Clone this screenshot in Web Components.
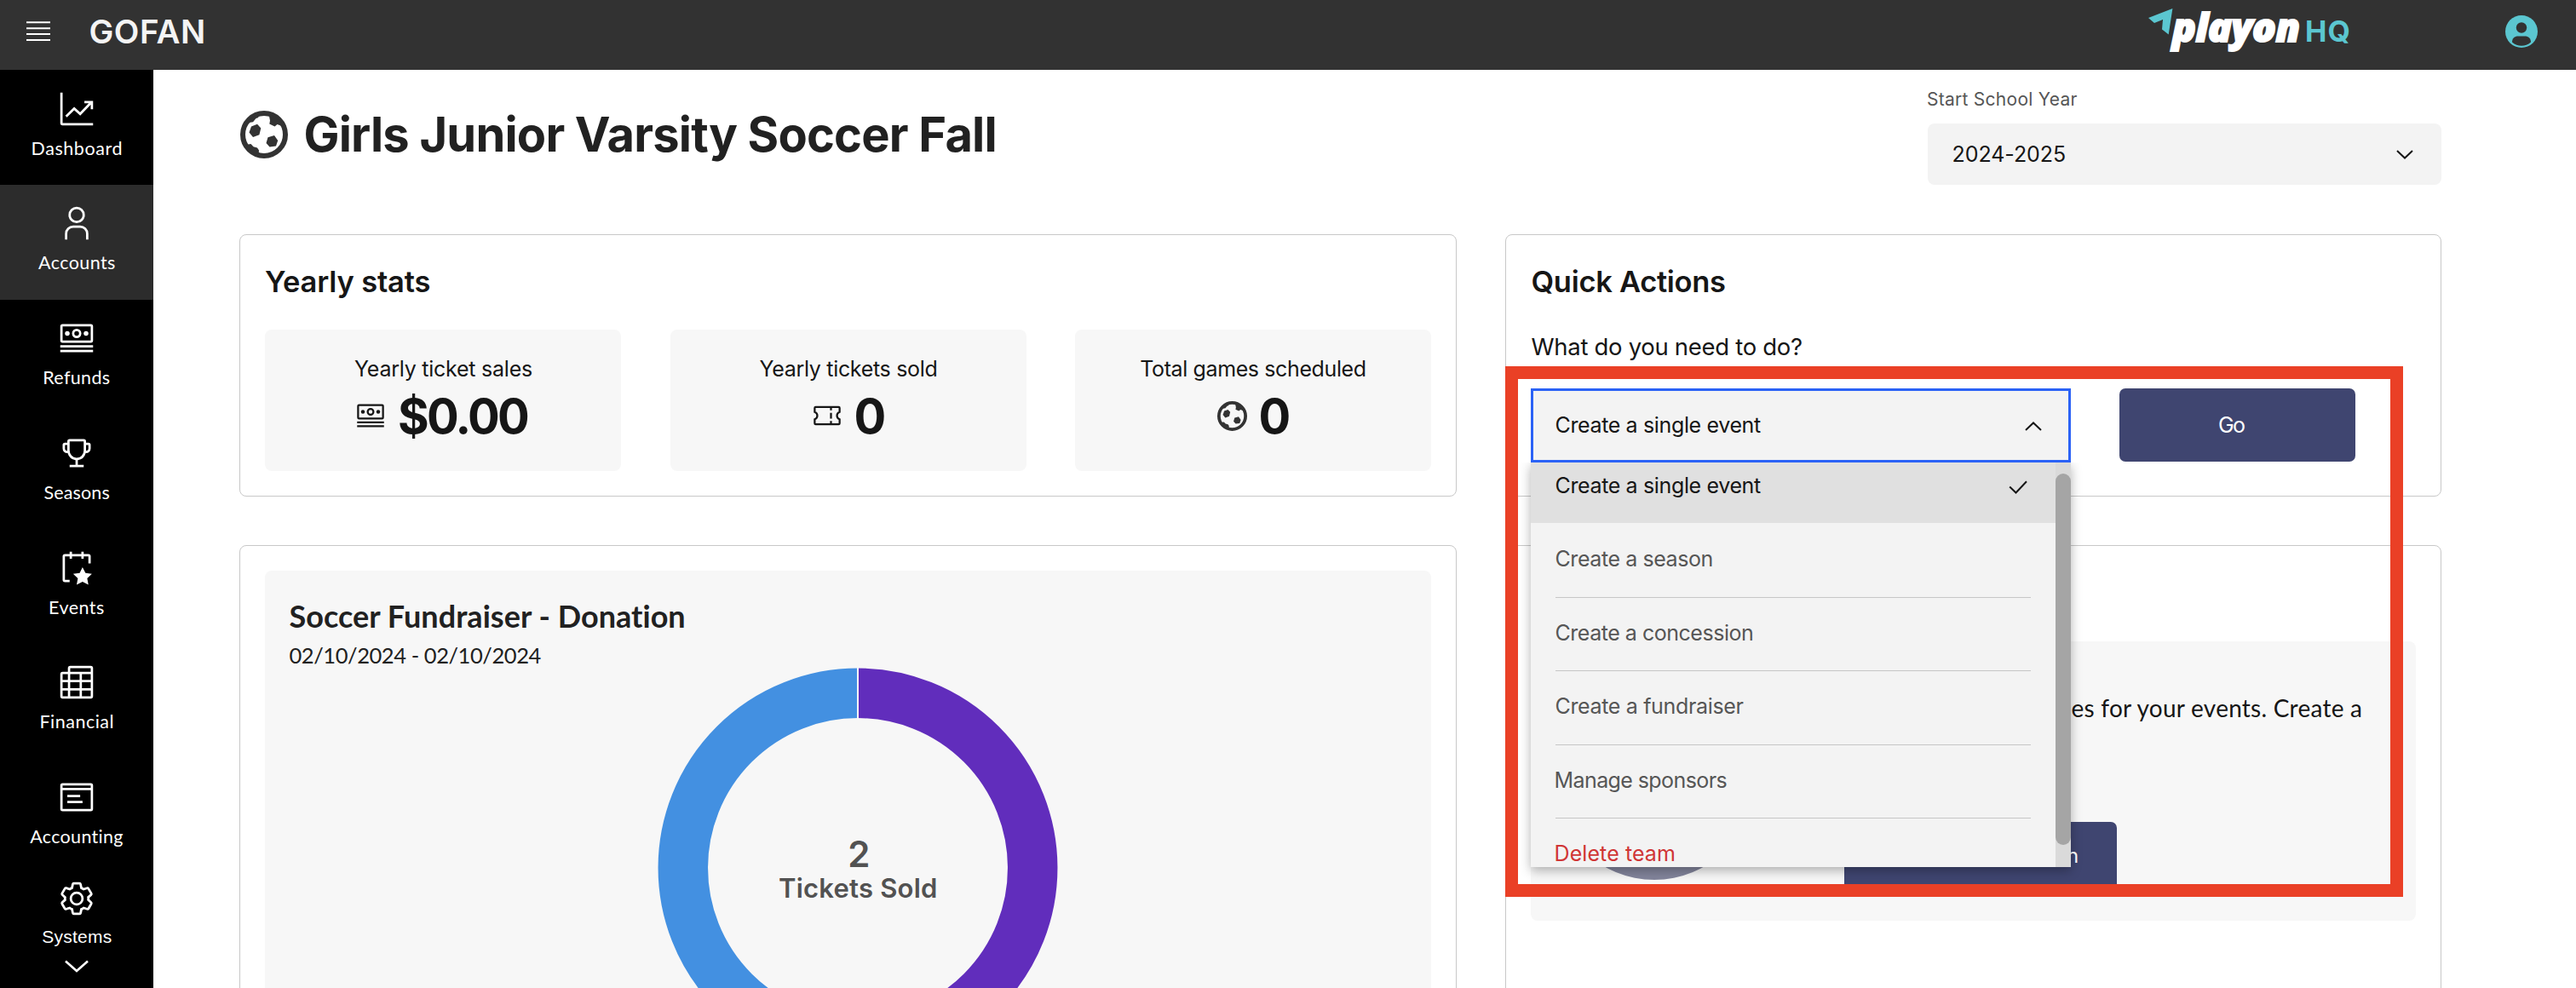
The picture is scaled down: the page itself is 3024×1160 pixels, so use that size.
<!DOCTYPE html>
<html lang="en">
<head>
<meta charset="utf-8">
<title>GoFan HQ</title>
<style>
html,body{margin:0;padding:0;background:#fff}
body{width:3024px;height:1160px;overflow:hidden;font-family:Inter,"Liberation Sans",sans-serif;color:#161616}
</style>
</head>
<body>
<gofan-app></gofan-app>
<script>
const make = (name, html, ready) => customElements.define(name, class extends HTMLElement {
  connectedCallback() {
    if (this.shadowRoot) return;
    const root = this.attachShadow({ mode: 'open' });
    root.innerHTML = typeof html === 'function' ? html(this) : html;
    if (ready) ready(this, root);
  }
});

/* One line of type. "w" is the inked measure, "rise" the distance from the box top to the baseline. */
const pen = document.createElement('canvas').getContext('2d');
make('t-line', `<style>
  :host{display:block;flex:none;white-space:pre}
  span{display:block}
</style><span><slot></slot></span>`, (el, root) => {
  const size = +el.getAttribute('size'), w = +el.getAttribute('w'), rise = +el.getAttribute('rise');
  const weight = el.getAttribute('weight') || 400, style = el.hasAttribute('italic') ? 'italic' : 'normal';
  const family = el.getAttribute('family') || 'Inter', text = el.textContent;
  pen.font = `${style} ${weight} ${size}px "${family}"`;
  const m = pen.measureText(text), ink = m.actualBoundingBoxLeft + m.actualBoundingBoxRight;
  const ls = text.length > 1 ? (w - ink) / (text.length - 1) : 0;
  const L = Math.round(size * 1.3);
  const base = L / 2 + (m.fontBoundingBoxAscent - m.fontBoundingBoxDescent) / 2;
  el.style.cssText += `;width:${w}px;height:${rise}px`;
  const s = root.querySelector('span');
  s.style.cssText = `font:${style} ${weight} ${size}px/${L}px "${family}",sans-serif;letter-spacing:${ls}px;` +
    `transform:translate(${m.actualBoundingBoxLeft}px,${rise - base}px)`;
});

const ICONS = {
  chart: ['0 0 32 32', '<path d="M4 2H2v26a2 2 0 0 0 2 2h26v-2H4z"/><path d="M7 22.3 13.9 15.6 19 20.2 28.6 10.2M22.6 10H29v6.2" fill="none" stroke="currentColor" stroke-width="2"/>'],
  user: ['0 0 32 32', '<path d="M16 4a5 5 0 1 1-5 5 5 5 0 0 1 5-5m0-2a7 7 0 1 0 7 7A7 7 0 0 0 16 2zM26 30H24V25a5 5 0 0 0-5-5H13a5 5 0 0 0-5 5v5H6V25a7 7 0 0 1 7-7h6a7 7 0 0 1 7 7z"/>'],
  money: ['0 0 32 32', '<path d="M2 22h28v2H2zM2 26h28v2H2z"/><circle cx="24" cy="12" r="2"/><circle cx="8" cy="12" r="2"/><path d="M16 16a4 4 0 1 1 4-4 4 4 0 0 1-4 4zm0-6a2 2 0 1 0 2 2 2 2 0 0 0-2-2z"/><path d="M28 20H4a2 2 0 0 1-2-2V6a2 2 0 0 1 2-2H28a2 2 0 0 1 2 2V18a2 2 0 0 1-2 2zm0-14H4V18H28z"/>'],
  trophy: ['0 0 32 32', '<path d="M26 7H24V6a2 2 0 0 0-2-2H10A2 2 0 0 0 8 6V7H6A2 2 0 0 0 4 9v3a4 4 0 0 0 4 4h.322A8.169 8.169 0 0 0 15 21.934V26H10v2H22V26H17V21.931A7.966 7.966 0 0 0 23.74 16H24a4 4 0 0 0 4-4V9A2 2 0 0 0 26 7zM8 14a2 2 0 0 1-2-2V9H8zm14 0a6 6 0 0 1-6.186 5.997A6.199 6.199 0 0 1 10 13.707V6H22zm4-2a2 2 0 0 1-2 2V9h2z"/>'],
  event: ['0 0 32 32', '<path d="M21 15 23.549 19.938 29 20.729 25 24.573 26 30 21 27.438 16 30 17 24.573 13 20.729 18.6 19.938z" transform="translate(0 .2)"/><path d="M26 4H22V2H20V4H12V2H10V4H6A2 2 0 0 0 4 6V26a2 2 0 0 0 2 2h4V26H6V6h4V8h2V6h8V8h2V6h4v6h2V6A2 2 0 0 0 26 4z"/>'],
  table: ['0 0 32 32', '<path d="M9.5 8H4a1 1 0 0 0-1 1V28a1 1 0 0 0 1 1H28a1 1 0 0 0 1-1V4a1 1 0 0 0-1-1H10.500a1 1 0 0 0-1 1V29M9.500 8H29M3 15H29M3 22H29M19.500 8V29" fill="none" stroke="currentColor" stroke-width="2"/>'],
  account: ['0 0 32 32', '<path d="M28 4H4A2 2 0 0 0 2 6V26a2 2 0 0 0 2 2H28a2 2 0 0 0 2-2V6A2 2 0 0 0 28 4zm0 2V8H4V6zM4 26V10H28V26z"/><path d="M8 14H19v2H8zM8 19H21v2H8z"/>'],
  gear: ['0 0 32 32', '<path d="M27 16.76c0-.25 0-.5 0-.76s0-.51 0-.77l1.92-1.68A2 2 0 0 0 29.3 11L26.94 7a2 2 0 0 0-1.73-1 2 2 0 0 0-.64.1l-2.43.82a11.35 11.35 0 0 0-1.31-.75l-.51-2.52a2 2 0 0 0-2-1.61H13.64a2 2 0 0 0-2 1.61l-.51 2.52a11.48 11.48 0 0 0-1.32.75L7.43 6.06A2 2 0 0 0 6.79 6 2 2 0 0 0 5.06 7L2.7 11a2 2 0 0 0 .41 2.51L5 15.24c0 .25 0 .5 0 .76s0 .51 0 .77L3.11 18.45A2 2 0 0 0 2.7 21L5.06 25a2 2 0 0 0 1.73 1 2 2 0 0 0 .64-.1l2.43-.82a11.35 11.35 0 0 0 1.31.75l.51 2.52a2 2 0 0 0 2 1.61h4.72a2 2 0 0 0 2-1.61l.51-2.52a11.48 11.48 0 0 0 1.32-.75l2.42.82a2 2 0 0 0 .64.1 2 2 0 0 0 1.73-1L29.3 21a2 2 0 0 0-.41-2.51zM25.21 24l-3.43-1.16a8.86 8.86 0 0 1-2.71 1.57L18.36 28H13.64l-.71-3.55a9.36 9.36 0 0 1-2.7-1.57L6.79 24 4.43 20l2.72-2.4a8.9 8.9 0 0 1 0-3.13L4.43 12 6.79 8l3.43 1.16a8.86 8.86 0 0 1 2.71-1.57L13.64 4h4.72l.71 3.55a9.36 9.36 0 0 1 2.7 1.57L25.21 8 27.57 12l-2.72 2.4a8.9 8.9 0 0 1 0 3.13L27.57 20z"/><path d="M16 22a6 6 0 1 1 6-6A5.94 5.94 0 0 1 16 22zm0-10a3.91 3.91 0 0 0-4 4 3.91 3.91 0 0 0 4 4 3.91 3.91 0 0 0 4-4A3.91 3.91 0 0 0 16 12z"/>'],
  ticket: ['0 0 32 32', '<path d="M4 7H28a1 1 0 0 1 1 1V12.200A4 4 0 0 0 29 19.800V24a1 1 0 0 1-1 1H4a1 1 0 0 1-1-1V19.800A4 4 0 0 0 3 12.200V8A1 1 0 0 1 4 7z" fill="none" stroke="currentColor" stroke-width="2"/><path d="M19 7h2v3.500h-2zM19 13h2v6h-2zM19 21.500h2V25h-2z"/>'],
  soccer: ['0 0 56 56', '<circle cx="28" cy="28" r="25" fill="none" stroke="currentColor" stroke-width="6"/><path d="M13 18.500 20 15.800 24.300 20.500 22.400 28.200 15 31 10.500 25.500zM40 29 44.200 35 42 41.500 34.500 42.500 30.500 38 32.500 31.200zM33.500 4 35 11.500 34.300 15.500 40.500 18.500 43.500 16 50 18.500 44 8zM6 40 12.500 39 15.500 42.200 20 43.500 22 46.500 21.500 52 12 48zM10 14 15 13.200 18.500 9 21.500 8 20 4 12 8z"/>'],
  down: ['0 0 20 11', '<path d="M1 1 10 9.500 19 1" fill="none" stroke="currentColor" stroke-width="2"/>'],
  up: ['0 0 20 11', '<path d="M1 10 10 1.500 19 10" fill="none" stroke="currentColor" stroke-width="2"/>'],
  expand: ['0 0 28 15', '<path d="M1 1.500 14 13 27 1.500" fill="none" stroke="currentColor" stroke-width="2.600"/>'],
  check: ['0 0 22 16', '<path d="M1.200 7.500 8.500 14.500 21 1.200" fill="none" stroke="currentColor" stroke-width="2"/>'],
  menu: ['0 0 28 23', '<path d="M0 1.300H28M0 8.300H28M0 15H28M0 22H28" fill="none" stroke="currentColor" stroke-width="2"/>'],
  avatar: ['0 0 38 38', '<circle cx="19" cy="19" r="19"/><circle cx="19" cy="14.500" r="6.200" fill="#323232"/><path d="M8 31.500C8 27 11 24.500 15 24.500H23C27 24.500 30 27 30 31.500Q25 35.800 19 35.800T8 31.500z" fill="#323232"/>'],
  bolt: ['0 0 29 31', '<path d="M0 11 28.400 0 23.700 30.500 16 24.500 17 13 7 17z"/>']
};
make('ui-icon', el => {
  const [box, body] = ICONS[el.getAttribute('name')];
  return `<style>:host{display:block;flex:none}svg{display:block;width:100%;height:100%;overflow:visible}</style>
  <svg viewBox="${box}" fill="currentColor">${body}</svg>`;
});

make('brand-logo', `<style>
  :host{display:flex;align-items:flex-start;height:82px}
  ui-icon{width:29px;height:31px;margin-top:10px;color:#5bc6d0}
  .p{color:#fff;margin-left:-3px;-webkit-text-stroke:2px #fff}
  .h{color:#5bc6d0;margin-left:9.500px}
</style>
<ui-icon name="bolt"></ui-icon>
<t-line class="p" family="Open Sans" weight="800" italic size="46" w="150.500" rise="48.500">playon</t-line>
<t-line class="h" weight="700" size="34" w="49.500" rise="49">HQ</t-line>`);

make('top-bar', `<style>
  :host{display:flex;align-items:flex-start;height:82px;background:#323232;color:#f4f4f4;box-sizing:border-box;padding-left:31px}
  .m{width:28px;height:23px;margin-top:25px;color:#fff}
  .t{margin-left:46.500px}
  brand-logo{margin-left:2283px}
  .a{width:38px;height:38px;margin:17.500px 0 0 183.500px;color:#5bc6d0}
</style>
<ui-icon class="m" name="menu"></ui-icon>
<t-line class="t" weight="600" size="38.500" w="133.500" rise="51">GOFAN</t-line>
<brand-logo></brand-logo>
<ui-icon class="a" name="avatar"></ui-icon>`);

make('nav-item', el => `<style>
  :host{display:flex;flex-direction:column;align-items:center;height:135px;box-sizing:border-box;padding-top:23.500px;color:#fff;width:180px}
  :host([active]){background:#2c2c2c}
  :host([open]){padding-top:7.500px}
  .i{width:44px;height:44px}
  .e{width:28px;height:15px;margin-top:20px}
</style>
<ui-icon class="i" name="${el.getAttribute('icon')}"></ui-icon>
<t-line family="${el.getAttribute('family') || 'Lato'}" size="${el.getAttribute('size') || 21.5}" w="${el.getAttribute('w')}" rise="${el.hasAttribute('open') ? 30 : 32}">${el.getAttribute('label')}</t-line>
${el.hasAttribute('open') ? '<ui-icon class="e" name="expand"></ui-icon>' : ''}`);

make('side-nav', `<style>
  :host{display:flex;flex-direction:column;width:180px;background:#000;height:1078px;flex:none}
</style>
<nav-item icon="chart" label="Dashboard" w="105"></nav-item>
<nav-item icon="user" label="Accounts" w="90" active></nav-item>
<nav-item icon="money" label="Refunds" w="77.500"></nav-item>
<nav-item icon="trophy" label="Seasons" w="77"></nav-item>
<nav-item icon="event" label="Events" w="64"></nav-item>
<nav-item icon="table" label="Financial" w="85"></nav-item>
<nav-item icon="account" label="Accounting" w="109.500"></nav-item>
<nav-item icon="gear" label="Systems" w="81.500" family="Liberation Sans" size="21" open></nav-item>`);

make('year-field', `<style>
  :host{display:block;width:603px}
  .l{color:#565656}
  .b{display:flex;align-items:flex-start;justify-content:space-between;height:72px;margin-top:21px;background:#f3f3f3;border-radius:8px;padding:0 33px 0 29.500px}
  ui-icon{width:20px;height:11px;margin-top:31px}
</style>
<t-line class="l" size="21" w="175.500" rise="42">Start School Year</t-line>
<div class="b"><t-line size="25" w="131.500" rise="45">2024-2025</t-line><ui-icon name="down"></ui-icon></div>`);

make('page-head', `<style>
  :host{display:flex;align-items:flex-start;height:193px;width:2585px}
  ui-icon{width:56px;height:56px;margin:48px 20.500px 0 1px;color:#333}
  .t{color:#212121}
  year-field{margin-left:auto}
</style>
<ui-icon name="soccer"></ui-icon>
<t-line class="t" weight="650" size="56" w="809" rise="96">Girls Junior Varsity Soccer Fall</t-line>
<year-field></year-field>`);

make('ui-card', `<style>
  :host{display:block;box-sizing:border-box;border:1px solid #c8c8c8;border-radius:8px;background:#fff}
</style><slot></slot>`);

make('stat-tile', el => `<style>
  :host{display:flex;flex-direction:column;align-items:center;width:418px;height:166px;background:#f7f7f7;border-radius:8px;flex:none}
  div{display:flex;align-items:flex-end;gap:16px;height:66.500px;margin-right:3px}
  ui-icon{width:36px;height:36px;margin-bottom:3px}
  ui-icon[name=soccer]{color:#333;width:35px;height:35px}
</style>
<t-line size="25" w="${el.getAttribute('lw')}" rise="55.500">${el.getAttribute('label')}</t-line>
<div><ui-icon name="${el.getAttribute('icon')}"></ui-icon><t-line weight="680" size="56" w="${el.getAttribute('vw')}" rise="66">${el.getAttribute('value')}</t-line></div>`);

make('yearly-stats', `<style>
  :host{display:block}
  .t{margin-left:29px}
  .r{display:flex;gap:57.500px;margin:44px 0 0 29px}
</style>
<t-line class="t" weight="600" size="34.500" w="193.500" rise="67">Yearly stats</t-line>
<div class="r">
  <stat-tile label="Yearly ticket sales" lw="208" icon="money" value="$0.00" vw="151"></stat-tile>
  <stat-tile label="Yearly tickets sold" lw="208" icon="ticket" value="0" vw="31"></stat-tile>
  <stat-tile label="Total games scheduled" lw="263.500" icon="soccer" value="0" vw="31"></stat-tile>
</div>`);

make('donut-chart', `<style>
  :host{display:grid;width:470px;height:470px;justify-items:center}
  svg,div{grid-area:1/1}
  div{display:flex;flex-direction:column;align-items:center;color:#525252}
</style>
<svg width="470" height="470" viewBox="0 0 470 470">
  <path d="M235 29.800A205.200 205.200 0 0 1 235 440.200" fill="none" stroke="#612dbc" stroke-width="58.500"/>
  <path d="M235 440.200A205.200 205.200 0 0 1 235 29.800" fill="none" stroke="#4390e1" stroke-width="58.500"/>
  <path d="M235 0V60M235 410V470" stroke="#f7f7f7" stroke-width="2"/>
</svg>
<div><t-line weight="600" size="42" w="19.500" rise="234">2</t-line><t-line weight="600" size="31" w="184" rise="36">Tickets Sold</t-line></div>`);

make('fundraiser-panel', `<style>
  :host{display:block;width:1369px;height:600px;margin:29px 0 0 29px;background:#f7f7f7;border-radius:8px}
  t-line{margin-left:28.500px;color:#212121}
  donut-chart{margin:5px 0 0 461px}
</style>
<t-line family="Lato" weight="700" size="36" w="466" rise="67.500">Soccer Fundraiser - Donation</t-line>
<t-line family="Lato" size="25.500" w="296" rise="41">02/10/2024 - 02/10/2024</t-line>
<donut-chart></donut-chart>`);

make('menu-item', el => `<style>
  :host{display:flex;align-items:flex-start;height:86.600px;box-sizing:border-box;padding:0 29px;color:#565656;flex:none}
  div{flex:1;display:flex;justify-content:space-between;align-items:flex-start;border-top:1px solid transparent}
  t-line{margin-left:.5px}
  :host([rule]) div{border-color:#c6c6c6}
  :host([active]){background:#e0e0e0;color:#161616;height:71px}
  :host([danger]){color:#d03535}
  ui-icon{width:22px;height:16px;margin:20px 4px 0 0}
</style>
<div><t-line size="25" w="${el.getAttribute('w')}" rise="${el.hasAttribute('active') ? 35 : 50}">${el.getAttribute('label')}</t-line>${el.hasAttribute('active') ? '<ui-icon name="check"></ui-icon>' : ''}</div>`);

make('action-select', `<style>
  :host{display:block;position:relative;width:634px}
  .f{display:flex;justify-content:space-between;align-items:flex-start;box-sizing:border-box;height:87px;border:3px solid #2b62f6;background:#f3f3f3;padding:0 31px 0 26.500px}
  .f ui-icon{width:20px;height:11px;margin-top:36px}
  .m{position:absolute;z-index:2;left:0;top:87px;width:634px;height:475px;display:flex;background:#f3f3f3;box-shadow:0 4px 12px rgba(0,0,0,.3);clip-path:inset(0 -30px -30px -30px)}
  .l{width:616px;height:475px;overflow:hidden;display:flex;flex-direction:column}
  .s{width:18px;background:#dadada}
  .s div{height:436px;margin-top:13px;border-radius:9px;background:#a5a5a5}
</style>
<div class="f"><t-line size="25" w="240.500" rise="49">Create a single event</t-line><ui-icon name="up"></ui-icon></div>
<div class="m">
  <div class="l">
    <menu-item active label="Create a single event" w="240.500"></menu-item>
    <menu-item label="Create a season" w="183"></menu-item>
    <menu-item rule label="Create a concession" w="230.500"></menu-item>
    <menu-item rule label="Create a fundraiser" w="220"></menu-item>
    <menu-item rule label="Manage sponsors" w="200"></menu-item>
    <menu-item rule danger label="Delete team" w="138.500"></menu-item>
  </div>
  <div class="s"><div></div></div>
</div>`);

make('ui-button', `<style>
  :host{display:flex;justify-content:center;align-items:flex-start;height:86px;border-radius:7px;background:#3f4570;color:#fff;box-sizing:border-box}
</style><slot></slot>`);

make('quick-actions', `<style>
  :host{display:block}
  .t{margin-left:30.500px}.q{margin-left:29.500px}
  .r{display:flex;gap:57px;margin:39.500px 0 0 29px}
  ui-button{width:277px;padding-right:13px}
</style>
<t-line class="t" weight="600" size="34.500" w="226.500" rise="67">Quick Actions</t-line>
<t-line class="q" size="27.500" w="317.500" rise="73.500">What do you need to do?</t-line>
<div class="r"><action-select></action-select><ui-button><t-line size="25" w="30" rise="52">Go</t-line></ui-button></div>`);

make('season-promo', `<style>
  :host{display:flex;align-items:flex-start;width:1039px;height:328px;margin:112px 0 0 29px;background:#f7f7f7;border-radius:8px}
  .c{width:236px;height:236px;border-radius:50%;background:#82849b;margin:44px 0 0 27px;flex:none}
  .x{margin-left:372.500px}
  ui-button{width:320px;margin:123px 0 0 105px;justify-content:flex-start;padding-left:262px}
</style>
<div class="c"></div>
<div><t-line class="x" family="Lato" size="28" w="341.500" rise="89">es for your events. Create a</t-line>
<ui-button><t-line size="24" w="12" rise="47.500">n</t-line></ui-button></div>`);

make('gofan-app', `<style>
  :host{display:block;position:relative;width:3024px;height:1160px;overflow:hidden}
  .b{display:flex}
  main{padding-left:101px;width:2585px}
  .g{display:grid;grid-template-columns:1429px 1099px;grid-template-rows:308px 700px;gap:57px}
  .callout{position:absolute;z-index:5;left:1767px;top:430px;width:1054px;height:623px;box-sizing:border-box;border:15px solid #ea4026}
</style>
<top-bar></top-bar>
<div class="b">
  <side-nav></side-nav>
  <main>
    <page-head></page-head>
    <div class="g">
      <ui-card><yearly-stats></yearly-stats></ui-card>
      <ui-card><quick-actions></quick-actions></ui-card>
      <ui-card><div style="display:flow-root"><fundraiser-panel></fundraiser-panel></div></ui-card>
      <ui-card><div style="display:flow-root"><season-promo></season-promo></div></ui-card>
    </div>
  </main>
</div>
<div class="callout"></div>`);
</script>
</body>
</html>
